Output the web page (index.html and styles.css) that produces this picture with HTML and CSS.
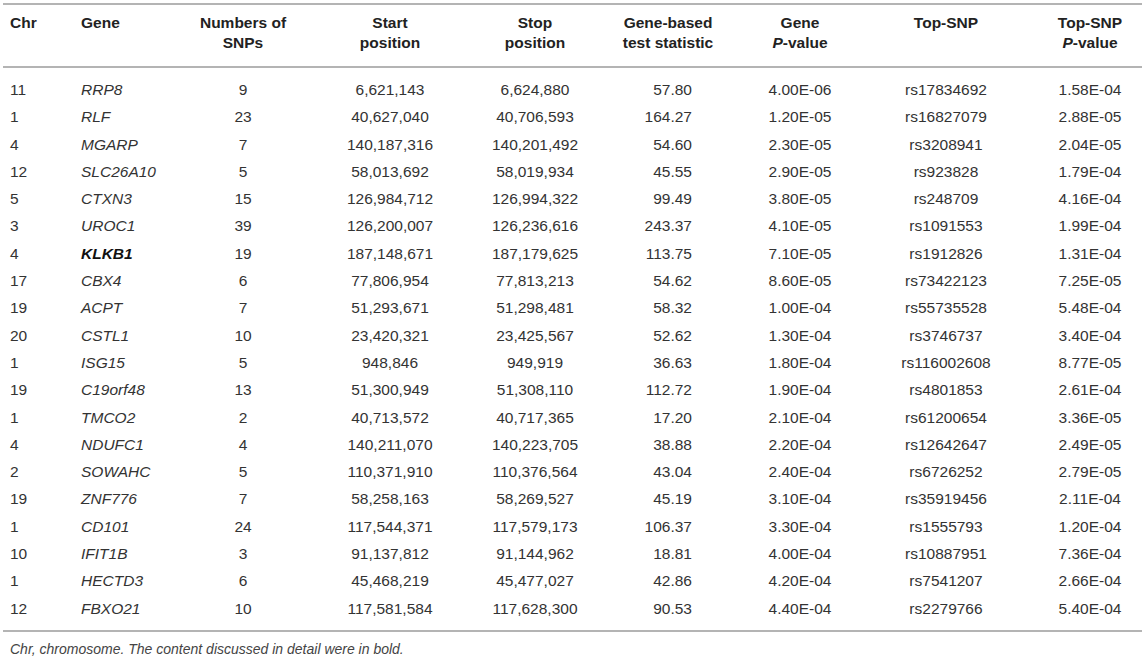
FILE: index.html
```html
<!DOCTYPE html>
<html>
<head>
<meta charset="utf-8">
<link rel="stylesheet" href="styles.css">
</head>
<body>
<div class="wrap">
<table class="gt">
<colgroup>
<col class="c-chr"><col class="c-gene"><col class="c-num"><col class="c-start"><col class="c-stop"><col class="c-stat"><col class="c-gp"><col class="c-snp"><col class="c-sp">
</colgroup>
<thead>
<tr>
<th class="l">Chr</th>
<th class="l">Gene</th>
<th>Numbers of<br>SNPs</th>
<th>Start<br>position</th>
<th>Stop<br>position</th>
<th>Gene-based<br>test statistic</th>
<th>Gene<br><i>P</i>-value</th>
<th>Top-SNP</th>
<th>Top-SNP<br><i>P</i>-value</th>
</tr>
</thead>
<tbody>
<tr><td class="l">11</td><td class="l g">RRP8</td><td>9</td><td>6,621,143</td><td>6,624,880</td><td class="r">57.80</td><td>4.00E-06</td><td>rs17834692</td><td>1.58E-04</td></tr>
<tr><td class="l">1</td><td class="l g">RLF</td><td>23</td><td>40,627,040</td><td>40,706,593</td><td class="r">164.27</td><td>1.20E-05</td><td>rs16827079</td><td>2.88E-05</td></tr>
<tr><td class="l">4</td><td class="l g">MGARP</td><td>7</td><td>140,187,316</td><td>140,201,492</td><td class="r">54.60</td><td>2.30E-05</td><td>rs3208941</td><td>2.04E-05</td></tr>
<tr><td class="l">12</td><td class="l g">SLC26A10</td><td>5</td><td>58,013,692</td><td>58,019,934</td><td class="r">45.55</td><td>2.90E-05</td><td>rs923828</td><td>1.79E-04</td></tr>
<tr><td class="l">5</td><td class="l g">CTXN3</td><td>15</td><td>126,984,712</td><td>126,994,322</td><td class="r">99.49</td><td>3.80E-05</td><td>rs248709</td><td>4.16E-04</td></tr>
<tr><td class="l">3</td><td class="l g">UROC1</td><td>39</td><td>126,200,007</td><td>126,236,616</td><td class="r">243.37</td><td>4.10E-05</td><td>rs1091553</td><td>1.99E-04</td></tr>
<tr><td class="l">4</td><td class="l g b">KLKB1</td><td>19</td><td>187,148,671</td><td>187,179,625</td><td class="r">113.75</td><td>7.10E-05</td><td>rs1912826</td><td>1.31E-04</td></tr>
<tr><td class="l">17</td><td class="l g">CBX4</td><td>6</td><td>77,806,954</td><td>77,813,213</td><td class="r">54.62</td><td>8.60E-05</td><td>rs73422123</td><td>7.25E-05</td></tr>
<tr><td class="l">19</td><td class="l g">ACPT</td><td>7</td><td>51,293,671</td><td>51,298,481</td><td class="r">58.32</td><td>1.00E-04</td><td>rs55735528</td><td>5.48E-04</td></tr>
<tr><td class="l">20</td><td class="l g">CSTL1</td><td>10</td><td>23,420,321</td><td>23,425,567</td><td class="r">52.62</td><td>1.30E-04</td><td>rs3746737</td><td>3.40E-04</td></tr>
<tr><td class="l">1</td><td class="l g">ISG15</td><td>5</td><td>948,846</td><td>949,919</td><td class="r">36.63</td><td>1.80E-04</td><td>rs116002608</td><td>8.77E-05</td></tr>
<tr><td class="l">19</td><td class="l g">C19orf48</td><td>13</td><td>51,300,949</td><td>51,308,110</td><td class="r">112.72</td><td>1.90E-04</td><td>rs4801853</td><td>2.61E-04</td></tr>
<tr><td class="l">1</td><td class="l g">TMCO2</td><td>2</td><td>40,713,572</td><td>40,717,365</td><td class="r">17.20</td><td>2.10E-04</td><td>rs61200654</td><td>3.36E-05</td></tr>
<tr><td class="l">4</td><td class="l g">NDUFC1</td><td>4</td><td>140,211,070</td><td>140,223,705</td><td class="r">38.88</td><td>2.20E-04</td><td>rs12642647</td><td>2.49E-05</td></tr>
<tr><td class="l">2</td><td class="l g">SOWAHC</td><td>5</td><td>110,371,910</td><td>110,376,564</td><td class="r">43.04</td><td>2.40E-04</td><td>rs6726252</td><td>2.79E-05</td></tr>
<tr><td class="l">19</td><td class="l g">ZNF776</td><td>7</td><td>58,258,163</td><td>58,269,527</td><td class="r">45.19</td><td>3.10E-04</td><td>rs35919456</td><td>2.11E-04</td></tr>
<tr><td class="l">1</td><td class="l g">CD101</td><td>24</td><td>117,544,371</td><td>117,579,173</td><td class="r">106.37</td><td>3.30E-04</td><td>rs1555793</td><td>1.20E-04</td></tr>
<tr><td class="l">10</td><td class="l g">IFIT1B</td><td>3</td><td>91,137,812</td><td>91,144,962</td><td class="r">18.81</td><td>4.00E-04</td><td>rs10887951</td><td>7.36E-04</td></tr>
<tr><td class="l">1</td><td class="l g">HECTD3</td><td>6</td><td>45,468,219</td><td>45,477,027</td><td class="r">42.86</td><td>4.20E-04</td><td>rs7541207</td><td>2.66E-04</td></tr>
<tr><td class="l">12</td><td class="l g">FBXO21</td><td>10</td><td>117,581,584</td><td>117,628,300</td><td class="r">90.53</td><td>4.40E-04</td><td>rs2279766</td><td>5.40E-04</td></tr>
</tbody>
</table>
<p class="note">Chr, chromosome. The content discussed in detail were in bold.</p>
</div>
</body>
</html>
```

FILE: styles.css
```css
html, body {
  margin: 0;
  padding: 0;
  background: #ffffff;
}
.wrap {
  padding: 3px 3px 0 3px;
  font-family: "Liberation Sans", Arial, sans-serif;
  color: #2b2b2b;
}
.gt {
  width: 1139px;
  table-layout: fixed;
  border-collapse: collapse;
  border-top: 2px solid #b4b4b4;
  border-bottom: 2px solid #b4b4b4;
}
.c-chr { width: 71px; }
.c-gene { width: 112px; }
.c-num { width: 114px; }
.c-start { width: 180px; }
.c-stop { width: 110px; }
.c-stat { width: 156px; }
.c-gp { width: 108px; }
.c-snp { width: 184px; }
.c-sp { width: 104px; }

.gt th {
  font-size: 15.5px;
  font-weight: bold;
  line-height: 20px;
  text-align: center;
  vertical-align: top;
  padding: 8px 0 13px 0;
  border-bottom: 2px solid #b4b4b4;
  color: #222;
}
.gt th i { font-style: italic; }
.gt td {
  font-size: 15.5px;
  line-height: 27.3px;
  text-align: center;
  padding: 0;
  white-space: nowrap;
  color: #333;
}
.gt .l { text-align: left; padding-left: 7px; }
.gt td.r { text-align: right; padding-right: 54px; }
.gt td.g { font-style: italic; }
.gt td.b { font-weight: bold; color: #111; }
.gt tbody tr:first-child td { padding-top: 8px; }
.gt tbody tr:last-child td { padding-bottom: 8px; }
.note {
  margin: 7px 0 0 7px;
  font-size: 14px;
  font-style: italic;
  line-height: 20px;
  color: #444;
}
```
